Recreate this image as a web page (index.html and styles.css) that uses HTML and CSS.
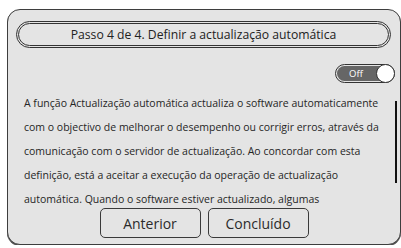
FILE: index.html
```html
<!DOCTYPE html>
<html lang="pt">
<head>
<meta charset="utf-8">
<link rel="stylesheet" href="styles.css">
</head>
<body>
<div class="panel">
  <div class="title-ring">
    <div class="title">Passo 4 de 4. Definir a actualização automática</div>
  </div>
  <div class="toggle-row">
    <div class="toggle">
      <div class="track"><span class="toggle-label">Off</span></div>
      <div class="knob"></div>
    </div>
  </div>
  <div class="content">
    <div class="text">A função Actualização automática actualiza o software automaticamente<br>com o objectivo de melhorar o desempenho ou corrigir erros, através da<br>comunicação com o servidor de actualização. Ao concordar com esta<br>definição, está a aceitar a execução da operação de actualização<br>automática. Quando o software estiver actualizado, algumas</div>
    <div class="scroll"><div class="thumb"></div></div>
  </div>
  <div class="buttons">
    <button class="btn">Anterior</button>
    <button class="btn">Concluído</button>
  </div>
</div>
</body>
</html>
```
FILE: styles.css
```css
html, body {
  margin: 0;
  padding: 0;
  background: #ffffff;
}
body {
  font-family: "Open Sans", "Noto Sans", sans-serif;
  color: #2b2b2b;
}
.panel {
  box-sizing: border-box;
  margin: 9px 0 0 7px;
  width: 394px;
  height: 236px;
  border: 1px solid #3e3e3e;
  border-radius: 13px;
  background: #e4e4e4;
  box-shadow: 0 1px 0 #555;
  display: flex;
  flex-direction: column;
  overflow: hidden;
}
.title-ring {
  box-sizing: border-box;
  margin: 11px 0 0 8px;
  width: 375px;
  height: 27px;
  border: 1px solid #333;
  border-radius: 14px;
  padding: 1px;
}
.title {
  box-sizing: border-box;
  height: 100%;
  border: 1px solid #333;
  border-radius: 12px;
  display: flex;
  align-items: center;
  justify-content: center;
  font-size: 12.2px;
  color: #222;
  white-space: nowrap;
}
.toggle-row {
  display: flex;
  justify-content: flex-end;
  margin: 16px 5px 0 0;
}
.toggle {
  position: relative;
  box-sizing: border-box;
  width: 60px;
  height: 19px;
  border: 1px solid #333;
  border-radius: 10px;
  padding: 1px;
}
.track {
  height: 100%;
  border-radius: 8px;
  background: #666;
  display: flex;
  align-items: center;
  padding-left: 12px;
}
.toggle-label {
  font-size: 9.5px;
  color: #fff;
}
.knob {
  position: absolute;
  top: -1px;
  right: -1px;
  box-sizing: border-box;
  width: 19px;
  height: 19px;
  border-radius: 50%;
  border: 1px solid #333;
  background: #fff;
}
.content {
  display: flex;
  height: 116px;
  margin-top: 8px;
  overflow: hidden;
}
.text {
  flex: 1;
  padding-left: 16px;
  font-size: 10.5px;
  line-height: 24px;
  white-space: nowrap;
  color: #262626;
}
.scroll {
  width: 8px;
  display: flex;
  justify-content: center;
}
.thumb {
  width: 2px;
  height: 82px;
  margin-top: 10px;
  background: #111;
}
.buttons {
  display: flex;
  justify-content: center;
  gap: 7px;
  margin-top: 1px;
}
.btn {
  box-sizing: border-box;
  width: 101px;
  height: 30px;
  border: 1px solid #3a3a3a;
  border-radius: 5px;
  background: #e4e4e4;
  font-family: "Open Sans", "Noto Sans", sans-serif;
  font-size: 14px;
  color: #2b2b2b;
  padding: 0;
}
```
